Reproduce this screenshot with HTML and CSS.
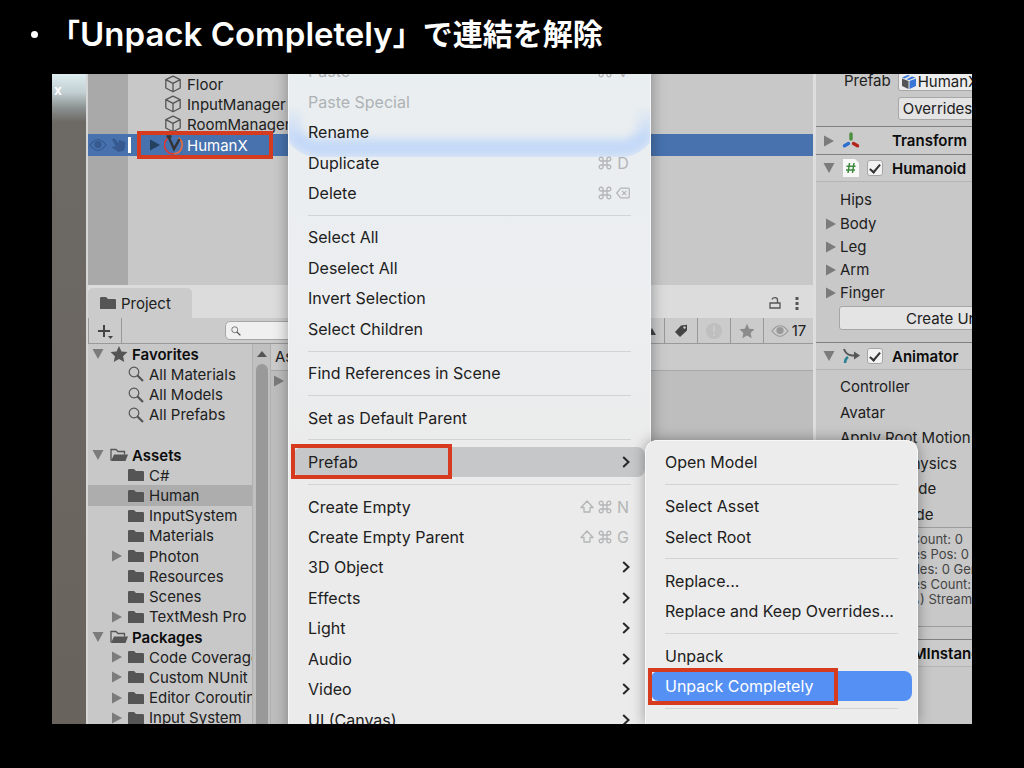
FILE: index.html
```html
<!DOCTYPE html>
<html lang="ja">
<head>
    <meta charset="UTF-8">
    <meta name="viewport" content="width=device-width, initial-scale=1.0">
    <title>Unpack Completely</title>
    <link rel="stylesheet" href="styles.css">
</head>
<body>
    <!-- Icon set -->
    <svg class="sprite" aria-hidden="true">
        <symbol id="cube" viewBox="0 0 18 18"><path d="M9 1.2 16.2 4.6V13L9 16.8 1.8 13V4.6ZM1.8 4.6 9 8.4l7.2-3.8M9 8.4v8.4" fill="none" stroke="#555" stroke-width="1.3" stroke-linejoin="round"/></symbol>
        <symbol id="vrm" viewBox="0 0 20 20"><path d="M3.5 3.5A8.7 8.7 0 0 0 10 18.7" fill="none" stroke="#e5352b" stroke-width="1.6"/><path d="M14.5 3A8.7 8.7 0 0 1 10 18.7" fill="none" stroke="#ef6a3a" stroke-width="1.6"/><path d="M2.5 1.5h5M4.5 1.5 10 14 15.5 4" fill="none" stroke="#333" stroke-width="2.4"/></symbol>
        <symbol id="right" viewBox="0 0 12 12"><path d="M1 0.5 11 6 1 11.5Z" fill="currentColor"/></symbol>
        <symbol id="down" viewBox="0 0 12 12"><path d="M.5 1h11L6 11Z" fill="currentColor"/></symbol>
        <symbol id="folder" viewBox="0 0 16 14"><path d="M0 2.2Q0 1 1.2 1H6l2 2h6.800Q16 3 16 4.200V13H0Z" fill="#555"/></symbol>
        <symbol id="folder-open" viewBox="0 0 18 14"><path d="M1 12.500V1.500h5l2 2h6.500v3" fill="none" stroke="#555" stroke-width="1.300"/><path d="M4 6.500h14L15.500 13H1Z" fill="#555"/></symbol>
        <symbol id="lens" viewBox="0 0 16 16"><circle cx="6" cy="6" r="4.800" fill="none" stroke="#555" stroke-width="1.200"/><path d="m9.500 9.500 5.500 5.500" stroke="#555" stroke-width="2.200"/></symbol>
        <symbol id="star" viewBox="0 0 16 16"><path d="m8 .8 2.200 4.900 5.300.600-3.900 3.600 1.100 5.300L8 12.500l-4.700 2.700 1.100-5.300L.5 6.300l5.300-.6Z" fill="currentColor"/></symbol>
        <symbol id="eye" viewBox="0 0 18 12"><path d="M1 6Q9-4.500 17 6 9 16.500 1 6Z" fill="none" stroke="currentColor" stroke-width="1.200"/><circle cx="9" cy="5.500" r="3.600" fill="currentColor"/></symbol>
        <symbol id="hand" viewBox="0 0 16 16"><path d="M1 2.500 3 1l4.500 5L8 3l2 .3.600 1.200 1.500-.8.900 1.200 1.500-.2L14 10l-1 3.500L7.500 15 1 10.500l1.500-1.300L5 10Z" fill="currentColor"/></symbol>
        <symbol id="tag" viewBox="0 0 14 14"><path d="M7 1.500 13 .8V6.500L6 13 1 8Z" fill="#444"/><circle cx="10.500" cy="3.500" r="1.200" fill="#cbcbcb"/></symbol>
        <symbol id="chevron" viewBox="0 0 8 12"><path d="m1.200 1 5.300 5-5.300 5" fill="none" stroke="#262626" stroke-width="2"/></symbol>
        <symbol id="cmd" viewBox="0 0 14 14"><path d="M5 5H3.200A1.900 1.900 0 1 1 5 3.200v7.600A1.900 1.900 0 1 1 3.200 9h7.600A1.900 1.900 0 1 1 9 10.800V3.200A1.900 1.900 0 1 1 10.800 5Z" fill="none" stroke="#b3b5b6" stroke-width="1.300"/></symbol>
        <symbol id="shift" viewBox="0 0 14 14"><path d="M7 1 13 7.500h-3V12H4V7.500H1Z" fill="none" stroke="#b3b5b6" stroke-width="1.300" stroke-linejoin="round"/></symbol>
        <symbol id="erase" viewBox="0 0 15 12"><path d="M5 .8h8.200q1 0 1 1v8.400q0 1-1 1H5L.8 6ZM6.500 3.700l4.600 4.600M11.100 3.700 6.500 8.300" fill="none" stroke="#b3b5b6" stroke-width="1.300" stroke-linejoin="round"/></symbol>
    </svg>

    <h1>「<span>Unpack Completely</span>」で連結を解除</h1>

    <main class="editor">
        <aside class="scene">x</aside>

        <div class="center">
            <ul class="hierarchy">
                <li><svg class="i18"><use href="#cube"/></svg>Floor</li>
                <li><svg class="i18"><use href="#cube"/></svg>InputManager</li>
                <li><svg class="i18"><use href="#cube"/></svg>RoomManager</li>
                <li class="selected">
                    <span class="toggles"><svg class="eye"><use href="#eye"/></svg><svg class="i16"><use href="#hand"/></svg></span>
                    <span class="marked"><svg class="i12"><use href="#right"/></svg><svg class="i20"><use href="#vrm"/></svg>HumanX</span>
                </li>
            </ul>

            <section class="project">
                <header class="tabs">
                    <h2><svg class="folder"><use href="#folder"/></svg>Project</h2>
                    <span class="tab-tools">
                        <svg class="i16" viewBox="0 0 16 16"><path d="M3 8h10v5H3ZM5 4.500Q5.500 2.700 8 2.700 10.500 2.700 10.500 5v3" fill="none" stroke="#555" stroke-width="1.300"/></svg>
                        <svg class="i16" viewBox="0 0 16 16"><path d="M6.500 2h3v3h-3zm0 5h3v3h-3zm0 5h3v3h-3z" fill="#555"/></svg>
                    </span>
                </header>
                <div class="toolbar">
                    <button class="add" aria-label="Create"><svg class="i20" viewBox="0 0 20 20"><path d="M9 4v12M3 10h12" stroke="#444" stroke-width="2"/><path d="M13 15h5l-2.500 3Z" fill="#444"/></svg></button>
                    <label class="search"><svg class="lens"><use href="#lens"/></svg><input type="text" aria-label="Search"></label>
                    <button aria-label="Filter by type"><svg class="i16" viewBox="0 0 16 16"><path d="M8 12h8L12 5Z" fill="#444"/></svg></button>
                    <button aria-label="Filter by label"><svg class="i14"><use href="#tag"/></svg></button>
                    <button aria-label="Filter by log"><svg class="i18" viewBox="0 0 18 18"><circle cx="9" cy="9" r="8" fill="#bfbfbf"/><path d="M9 4v6M9 12v2" stroke="#cbcbcb" stroke-width="2"/></svg></button>
                    <button class="dim" aria-label="Favorite"><svg class="i16"><use href="#star"/></svg></button>
                    <button class="hidden-count" aria-label="Hidden packages"><svg class="eye"><use href="#eye"/></svg>17</button>
                </div>
                <div class="browser">
                    <ul class="tree">
                        <li class="root"><svg class="i12"><use href="#down"/></svg><svg class="i18 dark"><use href="#star"/></svg>Favorites</li>
                        <li><svg class="i16"><use href="#lens"/></svg>All Materials</li>
                        <li><svg class="i16"><use href="#lens"/></svg>All Models</li>
                        <li><svg class="i16"><use href="#lens"/></svg>All Prefabs</li>
                        <li></li>
                        <li class="root"><svg class="i12"><use href="#down"/></svg><svg class="i18"><use href="#folder-open"/></svg>Assets</li>
                        <li><svg class="folder"><use href="#folder"/></svg>C#</li>
                        <li class="current"><svg class="folder"><use href="#folder"/></svg>Human</li>
                        <li><svg class="folder"><use href="#folder"/></svg>InputSystem</li>
                        <li><svg class="folder"><use href="#folder"/></svg>Materials</li>
                        <li class="closed"><svg class="i12"><use href="#right"/></svg><svg class="folder"><use href="#folder"/></svg>Photon</li>
                        <li><svg class="folder"><use href="#folder"/></svg>Resources</li>
                        <li><svg class="folder"><use href="#folder"/></svg>Scenes</li>
                        <li class="closed"><svg class="i12"><use href="#right"/></svg><svg class="folder"><use href="#folder"/></svg>TextMesh Pro</li>
                        <li class="root"><svg class="i12"><use href="#down"/></svg><svg class="i18"><use href="#folder-open"/></svg>Packages</li>
                        <li class="closed"><svg class="i12"><use href="#right"/></svg><svg class="folder"><use href="#folder"/></svg>Code Coverage</li>
                        <li class="closed"><svg class="i12"><use href="#right"/></svg><svg class="folder"><use href="#folder"/></svg>Custom NUnit</li>
                        <li class="closed"><svg class="i12"><use href="#right"/></svg><svg class="folder"><use href="#folder"/></svg>Editor Coroutines</li>
                        <li class="closed"><svg class="i12"><use href="#right"/></svg><svg class="folder"><use href="#folder"/></svg>Input System</li>
                    </ul>
                    <div class="scrollbar"><svg viewBox="0 0 10 6"><path d="M0 6h10L5 0Z" fill="#555"/></svg><div class="thumb"></div></div>
                    <div class="files">
                        <div class="crumbs">Assets</div>
                        <svg class="i12"><use href="#right"/></svg>
                    </div>
                </div>
            </section>
        </div>

        <aside class="inspector">
            <div class="prefab">
                <span>Prefab</span>
                <div class="prefab-fields">
                    <button class="object"><svg class="i14" viewBox="0 0 14 14"><path d="M0 3.500 6.500 6v8L0 11Z" fill="#555"/><path d="M7.500 6 14 3.500V11l-6.500 3ZM0 2.500 6 0l2 .7L2.500 3.500Zm4.500 1.800L10 1.500l3.500 1L7 5Z" fill="#3a76d8"/></svg>HumanX</button>
                    <button>Overrides</button>
                </div>
            </div>
            <h3><svg class="i12"><use href="#right"/></svg><svg class="i18" viewBox="0 0 18 18"><path d="M9 2v5" stroke="#4c8f3c" stroke-width="3.400" stroke-linecap="round"/><path d="m6.500 11.500-4 2.300" stroke="#2f6fd0" stroke-width="3.400" stroke-linecap="round"/><path d="m11.500 11.500 4 2.300" stroke="#b3261e" stroke-width="3.400" stroke-linecap="round"/></svg><i class="no-check"></i>Transform</h3>
            <h3 class="open"><svg class="i12"><use href="#down"/></svg><svg class="i18" viewBox="0 0 18 18"><path d="M1 0h12l4 4v14H1Z" fill="#f8f8f8"/><path d="M7.500 4 6 14M12 4l-1.500 10M4.500 7.200h9M4 11h9" stroke="#3c8a3c" stroke-width="1.500"/></svg><input type="checkbox" checked aria-label="Humanoid enabled">Humanoid</h3>
            <ul class="bones">
                <li>Hips</li>
                <li><svg class="i12"><use href="#right"/></svg>Body</li>
                <li><svg class="i12"><use href="#right"/></svg>Leg</li>
                <li><svg class="i12"><use href="#right"/></svg>Arm</li>
                <li><svg class="i12"><use href="#right"/></svg>Finger</li>
            </ul>
            <button class="create">Create UnityEngine.Avatar</button>
            <h3 class="open"><svg class="i12"><use href="#down"/></svg><svg class="i18" viewBox="0 0 18 18"><path d="M2 2q2 6 8 6.500h4" fill="none" stroke="#555" stroke-width="2"/><path d="m12 4.500 6 4-6 4Z" fill="#555"/><path d="M6 10q-3 2-3 6" fill="none" stroke="#2c8096" stroke-width="2.600"/></svg><input type="checkbox" checked aria-label="Animator enabled">Animator</h3>
            <ul class="props">
                <li>Controller</li>
                <li>Avatar</li>
                <li>Apply Root Motion</li>
                <li>Animate Physics</li>
                <li>Update Mode</li>
                <li>Culling Mode</li>
            </ul>
            <p class="info">Clip Count: 0<br>Curves Pos: 0<br>Muscles: 0 Generic<br>Curves Count: 0<br>(0.0%) Stream: 0</p>
            <h3 class="open"><svg class="i12"><use href="#down"/></svg><svg class="i18"></svg><input type="checkbox" checked aria-label="VRMInstance enabled">VRMInstance</h3>
        </aside>

        <nav class="menu">
            <button disabled>Paste<kbd><svg><use href="#cmd"/></svg><b>V</b></kbd></button>
            <button disabled>Paste Special</button>
            <button>Rename</button>
            <button>Duplicate<kbd><svg><use href="#cmd"/></svg><b>D</b></kbd></button>
            <button>Delete<kbd><svg><use href="#cmd"/></svg><svg><use href="#erase"/></svg></kbd></button>
            <hr>
            <button>Select All</button>
            <button>Deselect All</button>
            <button>Invert Selection</button>
            <button>Select Children</button>
            <hr>
            <button>Find References in Scene</button>
            <hr>
            <button>Set as Default Parent</button>
            <hr>
            <button class="hover marked">Prefab<svg class="chevron"><use href="#chevron"/></svg></button>
            <hr>
            <button>Create Empty<kbd><svg><use href="#shift"/></svg><svg><use href="#cmd"/></svg><b>N</b></kbd></button>
            <button>Create Empty Parent<kbd><svg><use href="#shift"/></svg><svg><use href="#cmd"/></svg><b>G</b></kbd></button>
            <button>3D Object<svg class="chevron"><use href="#chevron"/></svg></button>
            <button>Effects<svg class="chevron"><use href="#chevron"/></svg></button>
            <button>Light<svg class="chevron"><use href="#chevron"/></svg></button>
            <button>Audio<svg class="chevron"><use href="#chevron"/></svg></button>
            <button>Video<svg class="chevron"><use href="#chevron"/></svg></button>
            <button>UI (Canvas)<svg class="chevron"><use href="#chevron"/></svg></button>
        </nav>

        <nav class="menu submenu">
            <button>Open Model</button>
            <hr>
            <button>Select Asset</button>
            <button>Select Root</button>
            <hr>
            <button>Replace...</button>
            <button>Replace and Keep Overrides...</button>
            <hr>
            <button>Unpack</button>
            <button class="active marked">Unpack Completely</button>
            <hr>
        </nav>
    </main>
</body>
</html>
```

FILE: styles.css
```css
*, *::before {
    box-sizing: border-box;
}

body {
    margin: 0;
    height: 100vh;
    display: flex;
    flex-direction: column;
    background: #000;
    color: #202020;
    font-family: Inter, "Noto Sans CJK JP", sans-serif;
    font-size: 15px;
}

h1, h2, h3, ul, p {
    margin: 0;
    padding: 0;
    list-style: none;
}

button {
    font: inherit;
    color: inherit;
    white-space: nowrap;
}

svg {
    flex: none;
}

.sprite {
    position: absolute;
    width: 0;
    height: 0;
}

.i12 { width: 12px; height: 12px; color: #7b7b7b; }
.i14 { width: 14px; height: 14px; }
.i16 { width: 16px; height: 16px; }
.i18 { width: 18px; height: 18px; }
.i20 { width: 20px; height: 20px; }
.lens { width: 10px; height: 10px; }
.eye { width: 18px; height: 12px; }
.folder { width: 16px; height: 14px; }
.dark { color: #555; }

/* Slide title */
h1 {
    display: flex;
    align-items: center;
    height: 74px;
    padding: 0 0 6px 31px;
    color: #fff;
    font-size: 30px;
    font-weight: 600;
    line-height: 40px;
    white-space: nowrap;
}

h1::before {
    content: "";
    width: 7px;
    height: 7px;
    margin-right: 12px;
    border-radius: 50%;
    background: #fff;
}

h1 span {
    font-size: 33px;
}

/* Editor window */
.editor {
    position: relative;
    flex: 1;
    min-height: 0;
    display: flex;
    margin: 0 52px 44px;
    overflow: hidden;
    background: #c8c8c8;
}

.scene {
    width: 36px;
    padding: 8px 2px;
    border-right: 2px solid #d6d6d6;
    background: linear-gradient(#dcecef, #c3d0d3 18px, #8b9190 34px, #6d6965 48px, #69635d);
    color: #fff;
    font-size: 14px;
    font-weight: 600;
    line-height: 16px;
}

.center {
    flex: 1;
    min-width: 0;
    display: flex;
    flex-direction: column;
}

.hierarchy {
    height: 211px;
    background: linear-gradient(90deg, #a9a9a9 40px, #c8c8c8 40px);
}

.hierarchy li {
    display: flex;
    align-items: center;
    gap: 5px;
    height: 20px;
    padding-left: 76px;
}

.hierarchy .selected {
    height: 22px;
    padding: 0;
    gap: 6px;
    background: #4772ae;
    color: #fff;
}

.toggles {
    display: flex;
    align-items: center;
    gap: 4px;
    width: 43px;
    height: 16px;
    padding-left: 1px;
    border-right: 3px solid #fff;
    color: #36598f;
}

.selected .marked {
    display: flex;
    align-items: center;
    gap: 3px;
    width: 136px;
    padding-left: 12px;
}

.selected .i12 {
    color: #24405f;
}

/* Red call-out frame */
.marked {
    position: relative;
}

.marked::after {
    content: "";
    position: absolute;
    inset: -4px 0;
    border: 4px solid #d63b20;
}

/* Project panel */
.project {
    flex: 1;
    min-height: 0;
    display: flex;
    flex-direction: column;
}

.tabs {
    display: flex;
    justify-content: space-between;
    height: 33px;
    padding-top: 3px;
    background: #dcdcdc;
}

.tabs h2 {
    display: flex;
    align-items: center;
    gap: 5px;
    width: 104px;
    padding-left: 12px;
    border-radius: 5px 5px 0 0;
    background: #cbcbcb;
    font-size: 15px;
    font-weight: 400;
}

.tab-tools {
    display: flex;
    align-items: center;
    gap: 6px;
    padding-right: 8px;
}

.toolbar {
    display: flex;
    height: 26px;
    border-bottom: 1px solid #999;
    background: #cbcbcb;
}

.toolbar button {
    display: flex;
    align-items: center;
    justify-content: center;
    width: 33px;
    padding: 0;
    border: 0;
    border-left: 1px solid #999;
    background: none;
}

.toolbar .add {
    width: 34px;
    border-right: 1px solid #999;
}

.toolbar .dim {
    color: #8b8b8b;
}

.toolbar .hidden-count {
    width: 50px;
    gap: 3px;
}

.hidden-count .eye {
    color: #999;
}

.search {
    flex: 1;
    display: flex;
    align-items: center;
    margin: 3px 60px 3px 103px;
    padding-left: 5px;
    border: 1px solid #a6a6a6;
    border-radius: 5px;
    background: #f0f0f0;
}

.search input {
    flex: 1;
    min-width: 0;
    height: 16px;
    border: 0;
    background: none;
}

.browser {
    flex: 1;
    min-height: 0;
    display: flex;
}

.tree {
    display: grid;
    grid-auto-rows: 1fr;
    width: 164px;
    margin-bottom: -4px;
    overflow: hidden;
    white-space: nowrap;
}

.tree li {
    display: flex;
    align-items: center;
    gap: 5px;
    min-height: 0;
    padding-left: 40px;
}

.tree .closed {
    padding-left: 23px;
}

.tree .root {
    gap: 4px;
    padding-left: 4px;
    color: #0c0c0c;
    font-weight: 600;
}

.root .i12 {
    margin-right: 2px;
}

.tree .current {
    background: #adadad;
}

.scrollbar {
    display: flex;
    flex-direction: column;
    align-items: center;
    width: 19px;
    padding: 7px 2px 0;
    border: solid #b0b0b0;
    border-width: 0 1px;
    background: #c0c0c0;
}

.scrollbar svg {
    width: 10px;
    height: 6px;
}

.thumb {
    flex: 1;
    width: 12px;
    margin-top: 7px;
    border-radius: 6px 6px 0 0;
    background: #999;
}

.files {
    flex: 1;
    background: #bebebe;
}

.crumbs {
    height: 27px;
    padding-left: 4px;
    border-bottom: 1px solid #a8a8a8;
    background: #cbcbcb;
    line-height: 26px;
}

.files > .i12 {
    display: block;
    margin: 4px 2px;
}

/* Inspector */
.inspector {
    width: 159px;
    border-left: 3px solid #dedede;
    overflow: hidden;
    white-space: nowrap;
}

.prefab {
    display: flex;
    gap: 7px;
    height: 52px;
    padding-left: 28px;
    line-height: 14px;
}

.prefab-fields {
    display: grid;
    grid-template-rows: 17px 23px;
    gap: 6px;
}

.inspector button {
    padding: 0 4px;
    border: 1px solid #a6a6a6;
    border-radius: 3px;
    background: #e4e4e4;
    text-align: left;
}

.inspector .object {
    display: flex;
    align-items: center;
    gap: 2px;
    padding-left: 3px;
    border-top: 0;
    border-radius: 0 0 3px 3px;
    background: #ededed;
}

.inspector h3 {
    display: flex;
    align-items: center;
    height: 28px;
    padding-left: 7px;
    border-top: 1px solid #808080;
    background: #cbcbcb;
    color: #0c0c0c;
    font-size: 15px;
    font-weight: 600;
}

.inspector h3.open {
    border-bottom: 1px solid #b5b5b5;
}

h3 .i12 {
    margin-right: 7px;
}

h3 input, .no-check {
    flex: none;
    width: 16px;
    height: 16px;
    margin: 0 9px 0 7px;
}

h3 input {
    appearance: none;
    display: grid;
    place-items: center;
    border: 1px solid #a6a6a6;
    border-radius: 3px;
    background: #f2f2f2;
}

h3 input:checked::before {
    content: "";
    width: 6px;
    height: 11px;
    margin-bottom: 2px;
    border: solid #333;
    border-width: 0 2px 2px 0;
    transform: rotate(40deg);
}

.bones {
    padding-top: 5px;
}

.bones li {
    display: flex;
    align-items: center;
    gap: 3px;
    height: 23px;
    padding-left: 9px;
}

.bones li:first-child {
    height: 25px;
    padding-left: 24px;
}

.inspector .create {
    display: block;
    width: 300px;
    height: 24px;
    margin: 2px 0 12px 23px;
    padding-left: 66px;
}

.props {
    padding: 4px 0 0 24px;
    line-height: 26px;
}

.props li:nth-child(even) {
    line-height: 25px;
}

.info {
    height: 100px;
    margin-bottom: 12px;
    padding: 4px 0 0 67px;
    border: solid #9c9c9c;
    border-width: 1px 0;
    color: #444;
    font-size: 13px;
    line-height: 15px;
}

/* Context menus */
.menu {
    position: absolute;
    top: -19px;
    bottom: -12px;
    left: 236px;
    width: 363px;
    display: flex;
    flex-direction: column;
    padding: 0 5px;
    border: 1px solid #f6f7f8;
    background: linear-gradient(#e9eef1, #eceef0 35%, #ebebeb 60%);
    box-shadow: 0 0 14px rgba(0, 0, 0, 0.35);
    overflow: hidden;
    font-size: 16px;
}

/* Selection tint showing through the glass */
.menu::before {
    content: "";
    position: absolute;
    inset: -20px -6px auto;
    height: 121px;
    border: 18px solid #c4d9f8;
    border-radius: 0 0 34px 34px;
    filter: blur(4px);
    -webkit-mask-image: linear-gradient(transparent 70px, #000 102px);
    mask-image: linear-gradient(transparent 70px, #000 102px);
}

.menu button {
    position: relative;
    flex: 61 0 0;
    min-height: 0;
    display: flex;
    align-items: center;
    justify-content: space-between;
    padding: 0 14px;
    border: 0;
    border-radius: 8px;
    background: none;
}

.menu button:disabled {
    color: #aeb2b4;
}

.menu .hover {
    background: #c6c7c9;
}

.menu .active {
    background: #5590f5;
    color: #fff;
}

.menu hr {
    flex: 28 0 0;
    width: calc(100% - 28px);
    min-height: 0;
    margin: 0 14px;
    border: 0;
    background: linear-gradient(#d2d3d4, #d2d3d4) center / 100% 1px no-repeat;
}

.menu .marked::after {
    inset: -3px 193px -2px -3px;
}

kbd {
    display: flex;
    align-items: center;
    gap: 4px;
    margin-right: 1px;
    color: #b3b5b6;
    font-family: inherit;
    font-size: 16px;
}

kbd svg {
    width: 14px;
    height: 14px;
}

kbd b {
    width: 14px;
    font-weight: 400;
    text-align: center;
}

.chevron {
    width: 8px;
    height: 12px;
    margin-right: 1px;
}

.submenu {
    top: 366px;
    bottom: 0;
    left: 593px;
    width: 273px;
    padding: 6px 5px 9px;
    border-bottom: 0;
    border-radius: 12px 12px 0 0;
    background: #ececec;
    overflow: visible;
}

.submenu::before {
    display: none;
}

.submenu .marked::after {
    inset: -3px 74px -4px -3px;
}
```
